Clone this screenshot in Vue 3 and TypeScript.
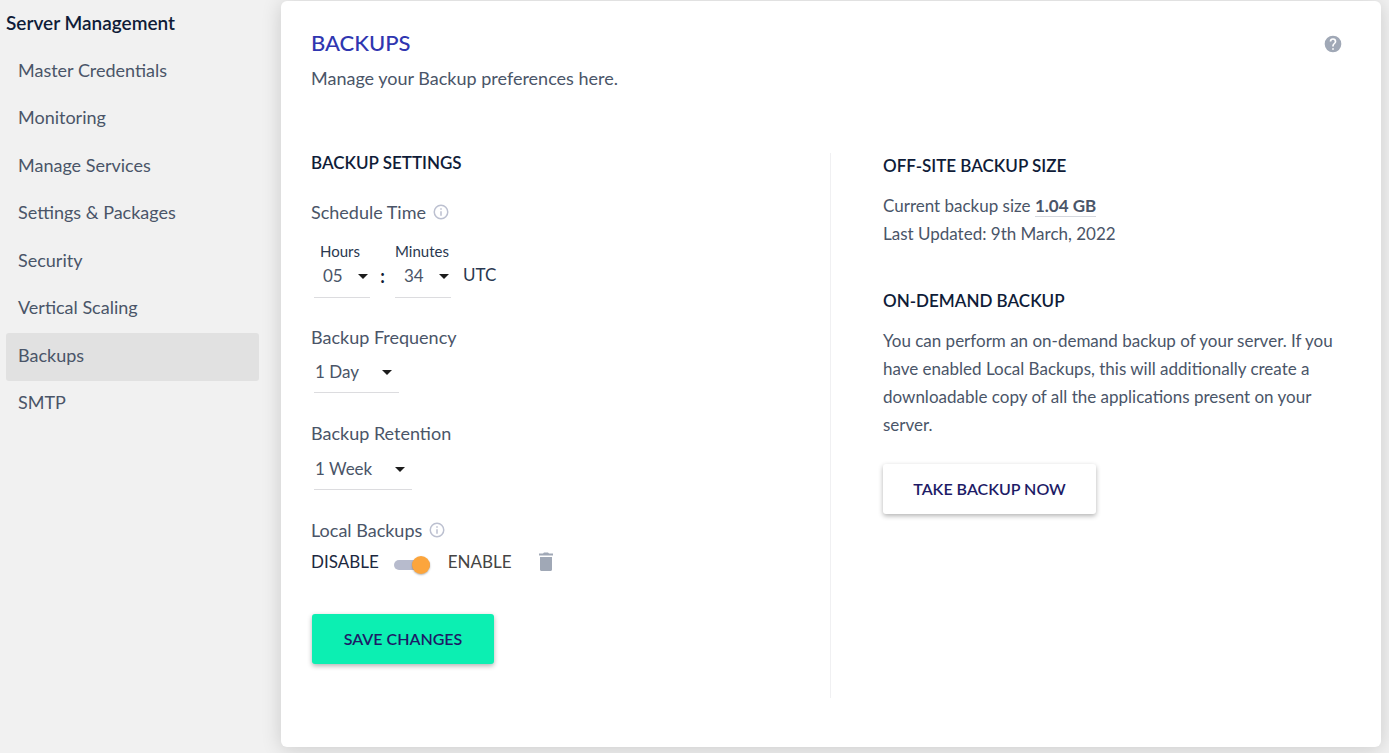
<script setup lang="ts">
import { ref } from 'vue'

const items: string[] = [
  'Master Credentials',
  'Monitoring',
  'Manage Services',
  'Settings & Packages',
  'Security',
  'Vertical Scaling',
  'Backups',
  'SMTP',
]
const active = ref('Backups')
const hours = ref('05')
const minutes = ref('34')
const frequency = ref('1 Day')
const retention = ref('1 Week')
const localBackups = ref(true)

const pad = (n: number): string => String(n).padStart(2, '0')
const hourOptions: string[] = Array.from({ length: 24 }, (_, i) => pad(i))
const minuteOptions: string[] = Array.from({ length: 60 }, (_, i) => pad(i))
const frequencyOptions: string[] = ['1 Day', '3 Days', '7 Days']
const retentionOptions: string[] = ['1 Week', '2 Weeks', '4 Weeks']
</script>

<template>
  <div class="page">
    <aside class="sidebar">
      <h2 class="side-title">Server Management</h2>
      <nav class="side-nav" aria-label="Server Management">
        <a
          v-for="item in items"
          :key="item"
          href="#"
          class="side-link"
          :class="{ active: item === active }"
          @click.prevent="active = item"
        >{{ item }}</a>
      </nav>
    </aside>

    <main class="card">
      <header class="card-head">
        <div>
          <h1 class="title">BACKUPS</h1>
          <p class="subtitle">Manage your Backup preferences here.</p>
        </div>
        <button class="icon-btn" type="button" aria-label="Help">
          <svg width="20" height="20" viewBox="0 0 24 24" fill="#a0a8b6">
            <path d="M12 2a10 10 0 1 0 0 20 10 10 0 0 0 0-20zm1 17h-2v-2h2v2zm2.1-7.8-.9.9C13.400 12.900 13 13.500 13 15h-2v-.5c0-1.100.4-2.100 1.200-2.800l1.200-1.300c.4-.3.600-.8.600-1.400a2 2 0 1 0-4 0H8a4 4 0 1 1 8 0c0 .9-.4 1.700-.9 2.200z" />
          </svg>
        </button>
      </header>

      <div class="columns">
        <section class="left">
          <h3 class="heading">BACKUP SETTINGS</h3>

          <div class="label-row">
            <span>Schedule Time</span>
            <svg class="info" width="18" height="18" viewBox="0 0 24 24" fill="#bcc0d0">
              <path d="M11 17h2v-6h-2v6zm1-15a10 10 0 1 0 0 20 10 10 0 0 0 0-20zm0 18a8 8 0 1 1 0-16 8 8 0 0 1 0 16zM11 9h2V7h-2v2z" />
            </svg>
          </div>
          <div class="time-row">
            <div class="time-field">
              <label for="hours">Hours</label>
              <div class="select-box time">
                <select id="hours" v-model="hours">
                  <option v-for="h in hourOptions" :key="h">{{ h }}</option>
                </select>
                <svg class="caret" width="10" height="5" viewBox="0 0 10 5"><path d="M0 0h10L5 5z" /></svg>
              </div>
            </div>
            <span class="colon">:</span>
            <div class="time-field">
              <label for="minutes">Minutes</label>
              <div class="select-box time">
                <select id="minutes" v-model="minutes">
                  <option v-for="m in minuteOptions" :key="m">{{ m }}</option>
                </select>
                <svg class="caret" width="10" height="5" viewBox="0 0 10 5"><path d="M0 0h10L5 5z" /></svg>
              </div>
            </div>
            <span class="utc">UTC</span>
          </div>

          <label class="label-row" for="frequency">Backup Frequency</label>
          <div class="select-box frequency">
            <select id="frequency" v-model="frequency">
              <option v-for="f in frequencyOptions" :key="f">{{ f }}</option>
            </select>
            <svg class="caret" width="10" height="5" viewBox="0 0 10 5"><path d="M0 0h10L5 5z" /></svg>
          </div>

          <label class="label-row" for="retention">Backup Retention</label>
          <div class="select-box retention">
            <select id="retention" v-model="retention">
              <option v-for="r in retentionOptions" :key="r">{{ r }}</option>
            </select>
            <svg class="caret" width="10" height="5" viewBox="0 0 10 5"><path d="M0 0h10L5 5z" /></svg>
          </div>

          <div class="label-row">
            <span>Local Backups</span>
            <svg class="info" width="18" height="18" viewBox="0 0 24 24" fill="#bcc0d0">
              <path d="M11 17h2v-6h-2v6zm1-15a10 10 0 1 0 0 20 10 10 0 0 0 0-20zm0 18a8 8 0 1 1 0-16 8 8 0 0 1 0 16zM11 9h2V7h-2v2z" />
            </svg>
          </div>
          <div class="toggle-row">
            <span class="off">DISABLE</span>
            <input v-model="localBackups" class="switch" type="checkbox" role="switch" aria-label="Local Backups" />
            <span class="on">ENABLE</span>
            <button class="icon-btn trash" type="button" aria-label="Delete local backup">
              <svg width="16" height="20" viewBox="0 0 16 20" fill="#a0a8b6">
                <path d="M2 5h12v12.500c0 .9-.6 1.500-1.500 1.500h-9c-.9 0-1.500-.6-1.500-1.500zM1 1.500h4l1-1h4l1 1h4V3.500H1z" />
              </svg>
            </button>
          </div>

          <button class="btn primary" type="button">SAVE CHANGES</button>
        </section>

        <section class="right">
          <h3 class="heading">OFF-SITE BACKUP SIZE</h3>
          <p class="copy">Current backup size <strong>1.04 GB</strong><br />Last Updated: 9th March, 2022</p>
          <h3 class="heading">ON-DEMAND BACKUP</h3>
          <p class="copy">
            You can perform an on-demand backup of your server. If you have enabled Local Backups, this will
            additionally create a downloadable copy of all the applications present on your server.
          </p>
          <button class="btn plain" type="button">TAKE BACKUP NOW</button>
        </section>
      </div>
    </main>
  </div>
</template>

<style>
body {
  margin: 0;
  background: #f1f1f1;
}
</style>

<style scoped>
.page {
  display: flex;
  box-sizing: border-box;
  min-height: 100vh;
  padding: 1px 8px 6px 6px;
  background: #f1f1f1;
  color: #4a5568;
  font-family: Lato, "Liberation Sans", sans-serif;
  font-size: 17px;
  line-height: 28px;
}
h1, h2, h3, p {
  margin: 0;
}
.sidebar {
  flex: 0 0 253px;
  margin-right: 22px;
}
.side-title {
  padding-top: 8px;
  color: #0f1c38;
  font-size: 19px;
  font-weight: 600;
  line-height: 28px;
}
.side-nav {
  display: grid;
  grid-auto-rows: 1fr;
  min-height: 380px;
  margin-top: 11px;
}
.side-link {
  display: flex;
  align-items: center;
  padding: 0 12px 4px;
  border-radius: 3px;
  color: #4a5568;
  font-size: 18px;
  text-decoration: none;
}
.side-link.active {
  background: #e1e1e1;
}
.card {
  flex: 1;
  box-sizing: border-box;
  padding: 28px 30px 48px;
  border-radius: 6px;
  background: #fff;
  box-shadow: 0 2px 20px rgba(0, 0, 0, 0.16);
}
.card-head {
  display: flex;
  justify-content: space-between;
  align-items: flex-start;
}
.title {
  color: #2f36b0;
  font-size: 22px;
  font-weight: 500;
  line-height: 28px;
}
.subtitle {
  margin-top: 7px;
  font-size: 18px;
}
.icon-btn {
  display: flex;
  padding: 0;
  border: 0;
  background: none;
  cursor: pointer;
}
.card-head .icon-btn {
  margin: 5px 8px 0 0;
}
.columns {
  display: grid;
  grid-template-columns: 1fr 1fr;
  margin-top: 61px;
}
.left {
  padding-bottom: 34px;
  border-right: 1px solid #f0f0f2;
}
.right {
  padding: 0 0 0 52px;
}
.heading {
  color: #0f1c38;
  font-size: 17px;
  font-weight: 600;
  line-height: 20px;
}
.label-row {
  display: flex;
  align-items: center;
  gap: 6px;
  font-size: 18px;
}
.left .heading + .label-row {
  margin-top: 25px;
}
.time-row {
  display: flex;
  margin: 15px 0 25px 3px;
}
.time-field label {
  display: block;
  padding-right: 4px;
  color: #2a3850;
  font-size: 15px;
  line-height: 20px;
  text-align: center;
}
.select-box {
  display: flex;
  align-items: center;
  box-sizing: border-box;
  height: 40px;
  margin-left: 3px;
  padding-bottom: 1px;
  border-bottom: 1px solid #dcdcdf;
}
.select-box select {
  flex: 1;
  min-width: 0;
  padding: 0 0 0 1px;
  border: 0;
  appearance: none;
  background: none;
  color: #4a5568;
  font: inherit;
}
.select-box.time {
  width: 56px;
  height: 37px;
  margin: 0;
  padding-bottom: 6px;
}
.select-box.time select {
  padding-left: 9px;
}
.caret {
  flex: none;
  margin-right: 7px;
  fill: #1c1c1c;
}
.time .caret {
  margin-right: 2px;
}
.colon {
  width: 25px;
  padding-top: 21px;
  color: #0f1c38;
  font-size: 18px;
  font-weight: 700;
  text-align: center;
}
.utc {
  padding: 20px 0 0 10px;
  color: #2a3850;
}
.frequency {
  width: 85px;
  margin-top: 2px;
  margin-bottom: 26px;
}
.retention {
  width: 98px;
  margin-top: 3px;
  margin-bottom: 26px;
}
.toggle-row {
  display: flex;
  align-items: center;
  margin-top: 4px;
}
.off {
  color: #1c2840;
}
.on {
  color: #444;
}
.switch {
  position: relative;
  flex: none;
  width: 36px;
  height: 10px;
  margin: 6px 18px 0 15px;
  border-radius: 5px;
  appearance: none;
  background: #b7bbcd;
}
.switch::after {
  content: "";
  position: absolute;
  top: -4px;
  left: 0;
  width: 18px;
  height: 18px;
  border-radius: 50%;
  background: #fca53c;
  box-shadow: 0 1px 2px rgba(0, 0, 0, 0.3);
}
.switch:checked::after {
  left: 18px;
}
.trash {
  margin-left: 26px;
}
.btn {
  height: 50px;
  border: 0;
  border-radius: 3px;
  box-shadow: 0 2px 5px rgba(0, 0, 0, 0.3);
  color: #1d1b66;
  font: 600 16px/20px Lato, "Liberation Sans", sans-serif;
  cursor: pointer;
}
.primary {
  width: 182px;
  margin: 38px 0 0 1px;
  background: #0cefb2;
}
.plain {
  width: 213px;
  margin-top: 25px;
  background: #fff;
}
.right .heading {
  padding-top: 3px;
}
.copy {
  margin-top: 16px;
}
.copy + .heading {
  margin-top: 40px;
}
.copy strong {
  border-bottom: 1px solid #d5d8de;
  font-weight: 700;
}
</style>
